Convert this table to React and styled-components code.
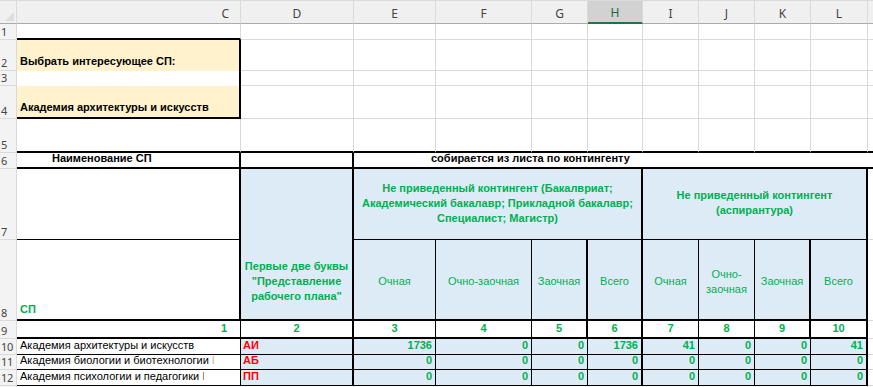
import React from 'react'
import styled, { createGlobalStyle } from 'styled-components'

const YELLOW = '#fff2cc'
const BLUE = '#ddebf7'
const GREEN = '#00b050'
const RED = '#ff0000'

const line = (v) => {
  if (v === 'thick') return '2px solid #000'
  if (v === 'thin') return '1px solid #000'
  if (v === 'none') return 'none'
  return '1px solid #dadada'
}

const vmap = { top: 'flex-start', center: 'center', bottom: 'flex-end' }
const hmap = { left: 'flex-start', center: 'center', right: 'flex-end' }

const GlobalStyle = createGlobalStyle`
  html, body {
    margin: 0;
    padding: 0;
    background: #fff;
    overflow: hidden;
  }
`

const Sheet = styled.div`
  display: grid;
  grid-template-columns: 17px 224px 113px 82px 96px 56px 55px 56px 56px 56px 57px 60px;
  grid-template-rows: 24px 16px 31px 15px 33px 34px 16px 71px 81px 18px 16px 15px 16px 20px;
  width: 873px;
  height: 387px;
  overflow: hidden;
  font-family: 'Liberation Sans', Arial, sans-serif;
  font-size: 11px;
`

const Corner = styled.div`
  position: relative;
  background: #f0f0f0;
  border-top: 1px solid #dadada;
  border-bottom: 1px solid #ababab;
  border-right: 1px solid #dadada;

  &::after {
    content: '';
    position: absolute;
    right: 2px;
    bottom: 2px;
    border-style: solid;
    border-width: 0 0 9px 9px;
    border-color: transparent transparent #dcdcdc transparent;
  }
`

const ColHead = styled.div`
  display: flex;
  align-items: center;
  justify-content: ${(p) => (p.$right ? 'flex-end' : 'center')};
  padding-right: ${(p) => (p.$right ? '11px' : '0')};
  padding-top: 2px;
  box-sizing: border-box;
  background: ${(p) => (p.$active ? '#d2d2d2' : '#f0f0f0')};
  color: ${(p) => (p.$active ? '#1e6b40' : '#444')};
  font-family: 'Noto Sans', 'Open Sans', sans-serif;
  font-size: 12px;
  border-top: 1px solid #dadada;
  border-right: 1px solid #dadada;
  border-bottom: ${(p) => (p.$active ? '2px solid #217346' : '1px solid #ababab')};
`

const RowHead = styled.div`
  display: flex;
  align-items: flex-end;
  padding: 0 0 1px 1px;
  box-sizing: border-box;
  background: #f3f3f3;
  color: #444;
  font-family: 'Noto Sans', 'Open Sans', sans-serif;
  font-size: 11px;
  line-height: 13px;
  border-right: 1px solid #dadada;
  border-bottom: 1px solid #dadada;
  letter-spacing: -0.3px;
  overflow: hidden;
`

const Cell = styled.div`
  grid-column: span ${(p) => p.$span || 1};
  display: flex;
  align-items: ${(p) => vmap[p.$valign || 'bottom']};
  justify-content: ${(p) => hmap[p.$align || 'left']};
  text-align: ${(p) => p.$align || 'left'};
  box-sizing: border-box;
  padding: ${(p) => p.$pad || '0 3px 2px 3px'};
  background: ${(p) => p.$fill || '#fff'};
  color: ${(p) => p.$color || '#000'};
  font-weight: ${(p) => (p.$bold ? 700 : 400)};
  line-height: 15px;
  border-right: ${(p) => line(p.$r)};
  border-bottom: ${(p) => line(p.$b)};
  white-space: nowrap;
  overflow: hidden;
`

const Stub = styled.span`
  display: inline-block;
  width: 2px;
  overflow: hidden;
  vertical-align: bottom;
  margin-left: 3px;
  color: ${(p) => p.$color};
`

const letters = ['C', 'D', 'E', 'F', 'G', 'H', 'I', 'J', 'K', 'L', '']

const subHeads = [
  'Очная',
  'Очно-заочная',
  'Заочная',
  'Всего',
  'Очная',
  <>Очно-<br />заочная</>,
  'Заочная',
  'Всего',
]
const headBorders = ['thin', 'thin', 'thick', 'thick', 'thin', 'thin', 'thick', 'thick']
const dataBorders = ['thin', 'thin', 'thin', 'thick', 'thin', 'thin', 'thin', 'thick']

const zeros = [0, 0, 0, 0, 0, 0, 0, 0]
const rows = [
  { n: 10, name: 'Академия архитектуры и искусств', code: 'АИ', vals: [1736, 0, 0, 1736, 41, 0, 0, 41] },
  { n: 11, name: 'Академия биологии и биотехнологии', stub: '#c8b293', code: 'АБ', vals: zeros },
  { n: 12, name: 'Академия психологии и педагогики', stub: '#555', code: 'ПП', vals: zeros },
]

const Blanks = ({ count, b }) =>
  Array.from({ length: count }).map((_, i) => <Cell key={i} $b={b} />)

export default function App() {
  return (
    <>
      <GlobalStyle />
      <Sheet>
        <Corner />
        {letters.map((l, i) => (
          <ColHead key={i} $active={l === 'H'} $right={l === 'C'}>
            {l}
          </ColHead>
        ))}

        <RowHead>1</RowHead>
        <Cell $b="thick" />
        <Blanks count={10} />

        <RowHead>2</RowHead>
        <Cell $fill={YELLOW} $bold $r="thick" $b="none">Выбрать интересующее СП:</Cell>
        <Blanks count={10} />

        <RowHead>3</RowHead>
        <Cell $r="thick" $b="none" />
        <Blanks count={10} />

        <RowHead>4</RowHead>
        <Cell $fill={YELLOW} $bold $r="thick" $b="thick">Академия архитектуры и искусств</Cell>
        <Blanks count={10} />

        <RowHead>5</RowHead>
        <Blanks count={11} b="thick" />

        <RowHead>6</RowHead>
        <Cell $bold $r="thick" $b="thick" $pad="0 3px 1px 35px">Наименование СП</Cell>
        <Cell $r="thick" $b="thick" />
        <Cell $span={8} $bold $r="none" $b="thick" $pad="0 3px 1px 77px">
          собирается из листа по контингенту
        </Cell>
        <Cell $b="thick" />

        <RowHead>7</RowHead>
        <Cell $r="thick" $b="thin" />
        <Cell $fill={BLUE} $r="thick" $b="none" />
        <Cell $span={4} $fill={BLUE} $color={GREEN} $bold $align="center" $valign="center" $r="thick" $b="thin">
          Не приведенный контингент (Бакалвриат;
          <br />
          Академический бакалавр; Прикладной бакалавр;
          <br />
          Специалист; Магистр)
        </Cell>
        <Cell $span={4} $fill={BLUE} $color={GREEN} $bold $align="center" $valign="center" $r="thick" $b="thin">
          Не приведенный контингент
          <br />
          (аспирантура)
        </Cell>
        <Cell />

        <RowHead>8</RowHead>
        <Cell $color={GREEN} $bold $r="thick" $b="thick">СП</Cell>
        <Cell $fill={BLUE} $color={GREEN} $bold $align="center" $valign="center" $r="thick" $b="thick" $pad="3px 1px 0 1px">
          Первые две буквы
          <br />
          "Представление
          <br />
          рабочего плана"
        </Cell>
        {subHeads.map((h, i) => (
          <Cell key={i} $fill={BLUE} $color={GREEN} $align="center" $valign="center" $r={headBorders[i]} $b="thick" $pad="4px 1px 0 1px">
            {h}
          </Cell>
        ))}
        <Cell />

        <RowHead>9</RowHead>
        <Cell $color={GREEN} $bold $align="right" $r="thin" $b="thick" $pad="0 13px 1px 3px">1</Cell>
        <Cell $color={GREEN} $bold $align="center" $r="thick" $b="thick" $pad="0 0 1px 0">2</Cell>
        {headBorders.map((r, i) => (
          <Cell key={i} $color={GREEN} $bold $align="center" $r={r} $b="thick" $pad="0 0 1px 0">
            {i + 3}
          </Cell>
        ))}
        <Cell />

        {rows.map((row) => (
          <React.Fragment key={row.n}>
            <RowHead>{row.n}</RowHead>
            <Cell $r="thin" $b="thin" $pad="0 3px 1px 3px">
              {row.name}
              {row.stub && <Stub $color={row.stub}>I</Stub>}
            </Cell>
            <Cell $fill={BLUE} $color={RED} $bold $r="thick" $b="thin" $pad="0 3px 1px 2px">
              {row.code}
            </Cell>
            {row.vals.map((v, i) => (
              <Cell key={i} $fill={BLUE} $color={GREEN} $bold $align="right" $r={dataBorders[i]} $b="thin" $pad="0 3px 1px 3px">
                {v}
              </Cell>
            ))}
            <Cell />
          </React.Fragment>
        ))}

        <RowHead />
        <Blanks count={11} />
      </Sheet>
    </>
  )
}
